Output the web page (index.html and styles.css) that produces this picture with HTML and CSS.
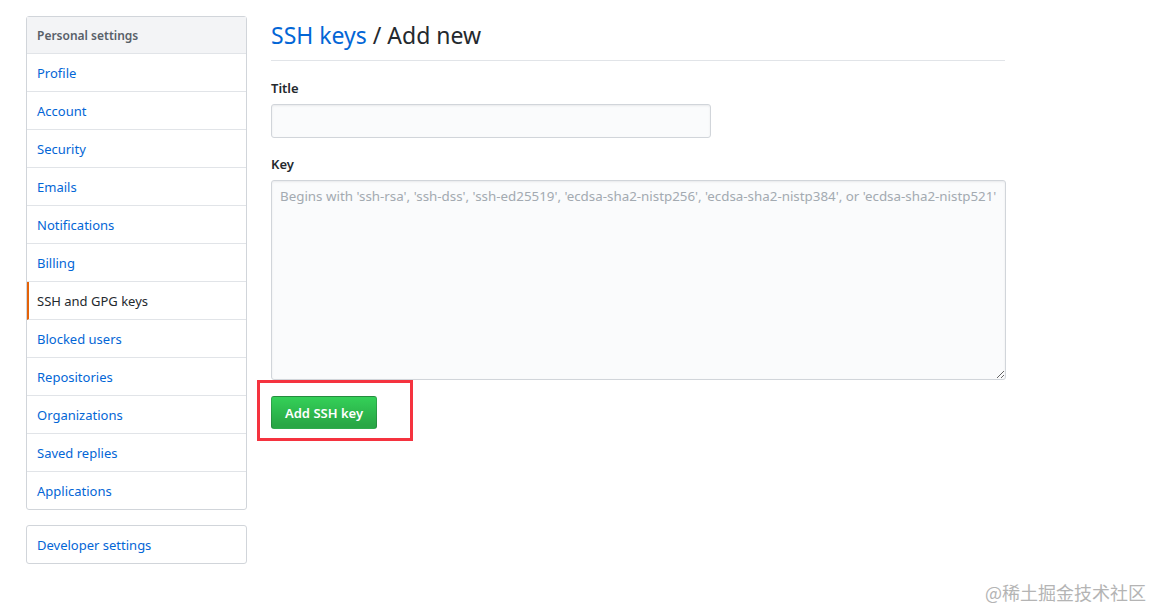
FILE: index.html
```html
<html lang="en">
<head>
    <meta charset="utf-8">
    <link rel="stylesheet" href="styles.css">
</head>
<body>
    <div class="page">
        <div class="sidebar">
            <nav class="menu">
                <div class="menu-heading">Personal settings</div>
                <a class="menu-item" href="#">Profile</a>
                <a class="menu-item" href="#">Account</a>
                <a class="menu-item" href="#">Security</a>
                <a class="menu-item" href="#">Emails</a>
                <a class="menu-item" href="#">Notifications</a>
                <a class="menu-item" href="#">Billing</a>
                <a class="menu-item selected" href="#">SSH and GPG keys</a>
                <a class="menu-item" href="#">Blocked users</a>
                <a class="menu-item" href="#">Repositories</a>
                <a class="menu-item" href="#">Organizations</a>
                <a class="menu-item" href="#">Saved replies</a>
                <a class="menu-item" href="#">Applications</a>
            </nav>

            <nav class="menu">
                <a class="menu-item" href="#">Developer settings</a>
            </nav>
        </div>

        <div class="main">
            <h2 class="subhead"><a href="#">SSH keys</a> / Add new</h2>

            <form>
                <dl class="form-group">
                    <dt><label for="title">Title</label></dt>
                    <dd><input id="title" class="form-control title-input" type="text"></dd>
                </dl>
                <dl class="form-group">
                    <dt><label for="key">Key</label></dt>
                    <dd><textarea id="key" class="form-control key-input" placeholder="Begins with 'ssh-rsa', 'ssh-dss', 'ssh-ed25519', 'ecdsa-sha2-nistp256', 'ecdsa-sha2-nistp384', or 'ecdsa-sha2-nistp521'"></textarea></dd>
                </dl>
                <div class="highlight">
                    <button class="btn-primary" type="button">Add SSH key</button>
                </div>
            </form>
        </div>
    </div>

    <div class="watermark">@稀土掘金技术社区</div>
</body>
</html>
```

FILE: styles.css
```css
body {
    margin: 0;
    font-family: "Noto Sans", "Open Sans", sans-serif;
    font-size: 13px;
    color: #24292e;
    background: #fff;
}

.page {
    display: flex;
    padding: 16px 0 0 26px;
}

.sidebar {
    width: 221px;
    flex-shrink: 0;
}

.menu {
    border: 1px solid #d1d5da;
    border-radius: 3px;
    margin-bottom: 15px;
    background: #fff;
}

.menu-heading {
    height: 36px;
    line-height: 37px;
    padding: 0 10px;
    background: #f3f4f6;
    border-bottom: 1px solid #e1e4e8;
    color: #586069;
    font-size: 12px;
    font-weight: 600;
}

.menu-item {
    display: block;
    height: 37px;
    line-height: 39px;
    padding: 0 10px;
    border-bottom: 1px solid #e1e4e8;
    color: #0366d6;
    text-decoration: none;
}

.menu-item:last-child {
    border-bottom: 0;
}

.menu-item.selected {
    color: #24292e;
    border-left: 2px solid #e36209;
    padding-left: 8px;
}

.main {
    margin-left: 24px;
    width: 734px;
}

.subhead {
    margin: 0 0 18px;
    padding: 3px 0 9px;
    border-bottom: 1px solid #e1e4e8;
    font-size: 23px;
    font-weight: 400;
    line-height: 32px;
}

.subhead a {
    color: #0366d6;
    text-decoration: none;
}

.form-group {
    margin: 0 0 17px;
}

.form-group dt {
    margin-bottom: 7px;
}

.form-group dd {
    margin: 0;
}

.form-group label {
    font-weight: 600;
    font-size: 13px;
}

.form-control {
    box-sizing: border-box;
    border: 1px solid #d1d5da;
    border-radius: 3px;
    background: #fafbfc;
    box-shadow: inset 0 1px 2px rgba(27, 31, 35, 0.075);
    font-family: inherit;
    font-size: 13px;
    color: #24292e;
    padding: 6px 8px;
}

.title-input {
    width: 440px;
    height: 34px;
}

.key-input {
    display: block;
    width: 735px;
    height: 200px;
    resize: vertical;
    font-size: 13.35px;
}

.key-input::placeholder {
    color: #a3aab1;
}

.highlight {
    display: inline-block;
    margin: -17px 0 0 -14px;
    padding: 13px 33px 9px 11px;
    border: 3px solid #f5333f;
}

.btn-primary {
    height: 33px;
    padding: 0 13px;
    border: 1px solid rgba(27, 31, 35, 0.2);
    border-radius: 3px;
    background: linear-gradient(#34d058, #28a745 90%);
    color: #fff;
    font-family: inherit;
    font-size: 13px;
    font-weight: 600;
}

.watermark {
    position: absolute;
    right: 7px;
    bottom: 6px;
    font-family: "Noto Sans CJK SC", sans-serif;
    font-size: 18px;
    color: #b4b4b4;
}
```
